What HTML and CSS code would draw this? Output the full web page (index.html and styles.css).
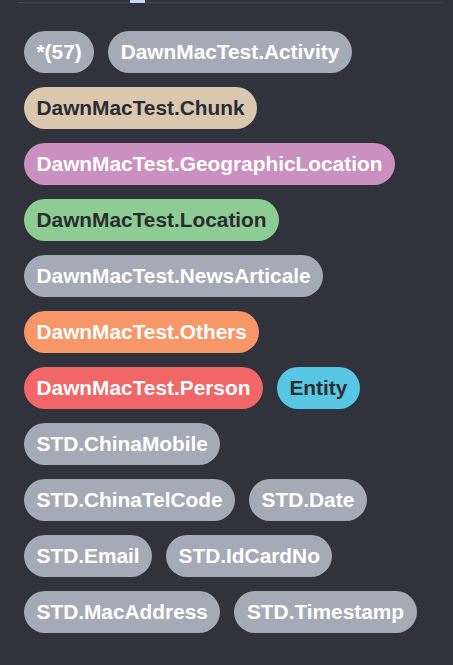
FILE: index.html
```html
<!DOCTYPE html>
<html>
<head>
<meta charset="utf-8">
<link rel="stylesheet" href="styles.css">
</head>
<body>
<div class="tabbar"><span class="indicator"></span></div>
<div class="labels">
  <span class="pill gray">*(57)</span>
  <span class="pill gray">DawnMacTest.Activity</span>
  <span class="pill tan">DawnMacTest.Chunk</span>
  <span class="pill purple">DawnMacTest.GeographicLocation</span>
  <span class="pill green">DawnMacTest.Location</span>
  <span class="pill gray">DawnMacTest.NewsArticale</span>
  <span class="pill orange">DawnMacTest.Others</span>
  <span class="pill red">DawnMacTest.Person</span>
  <span class="pill cyan">Entity</span>
  <span class="pill gray">STD.ChinaMobile</span>
  <span class="pill gray">STD.ChinaTelCode</span>
  <span class="pill gray">STD.Date</span>
  <span class="pill gray">STD.Email</span>
  <span class="pill gray">STD.IdCardNo</span>
  <span class="pill gray">STD.MacAddress</span>
  <span class="pill gray">STD.Timestamp</span>
</div>
</body>
</html>
```

FILE: styles.css
```css
html, body {
  margin: 0;
  padding: 0;
  background: #30333b;
  height: 100%;
}
body {
  font-family: "Liberation Sans", Arial, sans-serif;
}
.tabbar {
  position: relative;
  margin: 2px 12px 0 17px;
  height: 1px;
  background: #46494f;
}
.indicator {
  position: absolute;
  left: 113px;
  top: -2px;
  width: 15px;
  height: 3px;
  background: #c9d8f5;
}
.labels {
  display: flex;
  flex-wrap: wrap;
  gap: 14px 14px;
  padding: 28px 12px 0 24px;
}
.pill {
  display: inline-flex;
  align-items: center;
  height: 42px;
  padding: 0 12.5px;
  border-radius: 21px;
  font-size: 20.85px;
  font-weight: bold;
  color: #ffffff;
  white-space: nowrap;
  box-sizing: border-box;
}
.gray { background: #a5abb6; }
.tan { background: #d9c8ae; color: #2a2c34; }
.purple { background: #c990c0; }
.green { background: #8dcc93; color: #2a2c34; }
.orange { background: #f79767; }
.red { background: #f16667; }
.cyan { background: #57c7e3; color: #2a2c34; }
```
